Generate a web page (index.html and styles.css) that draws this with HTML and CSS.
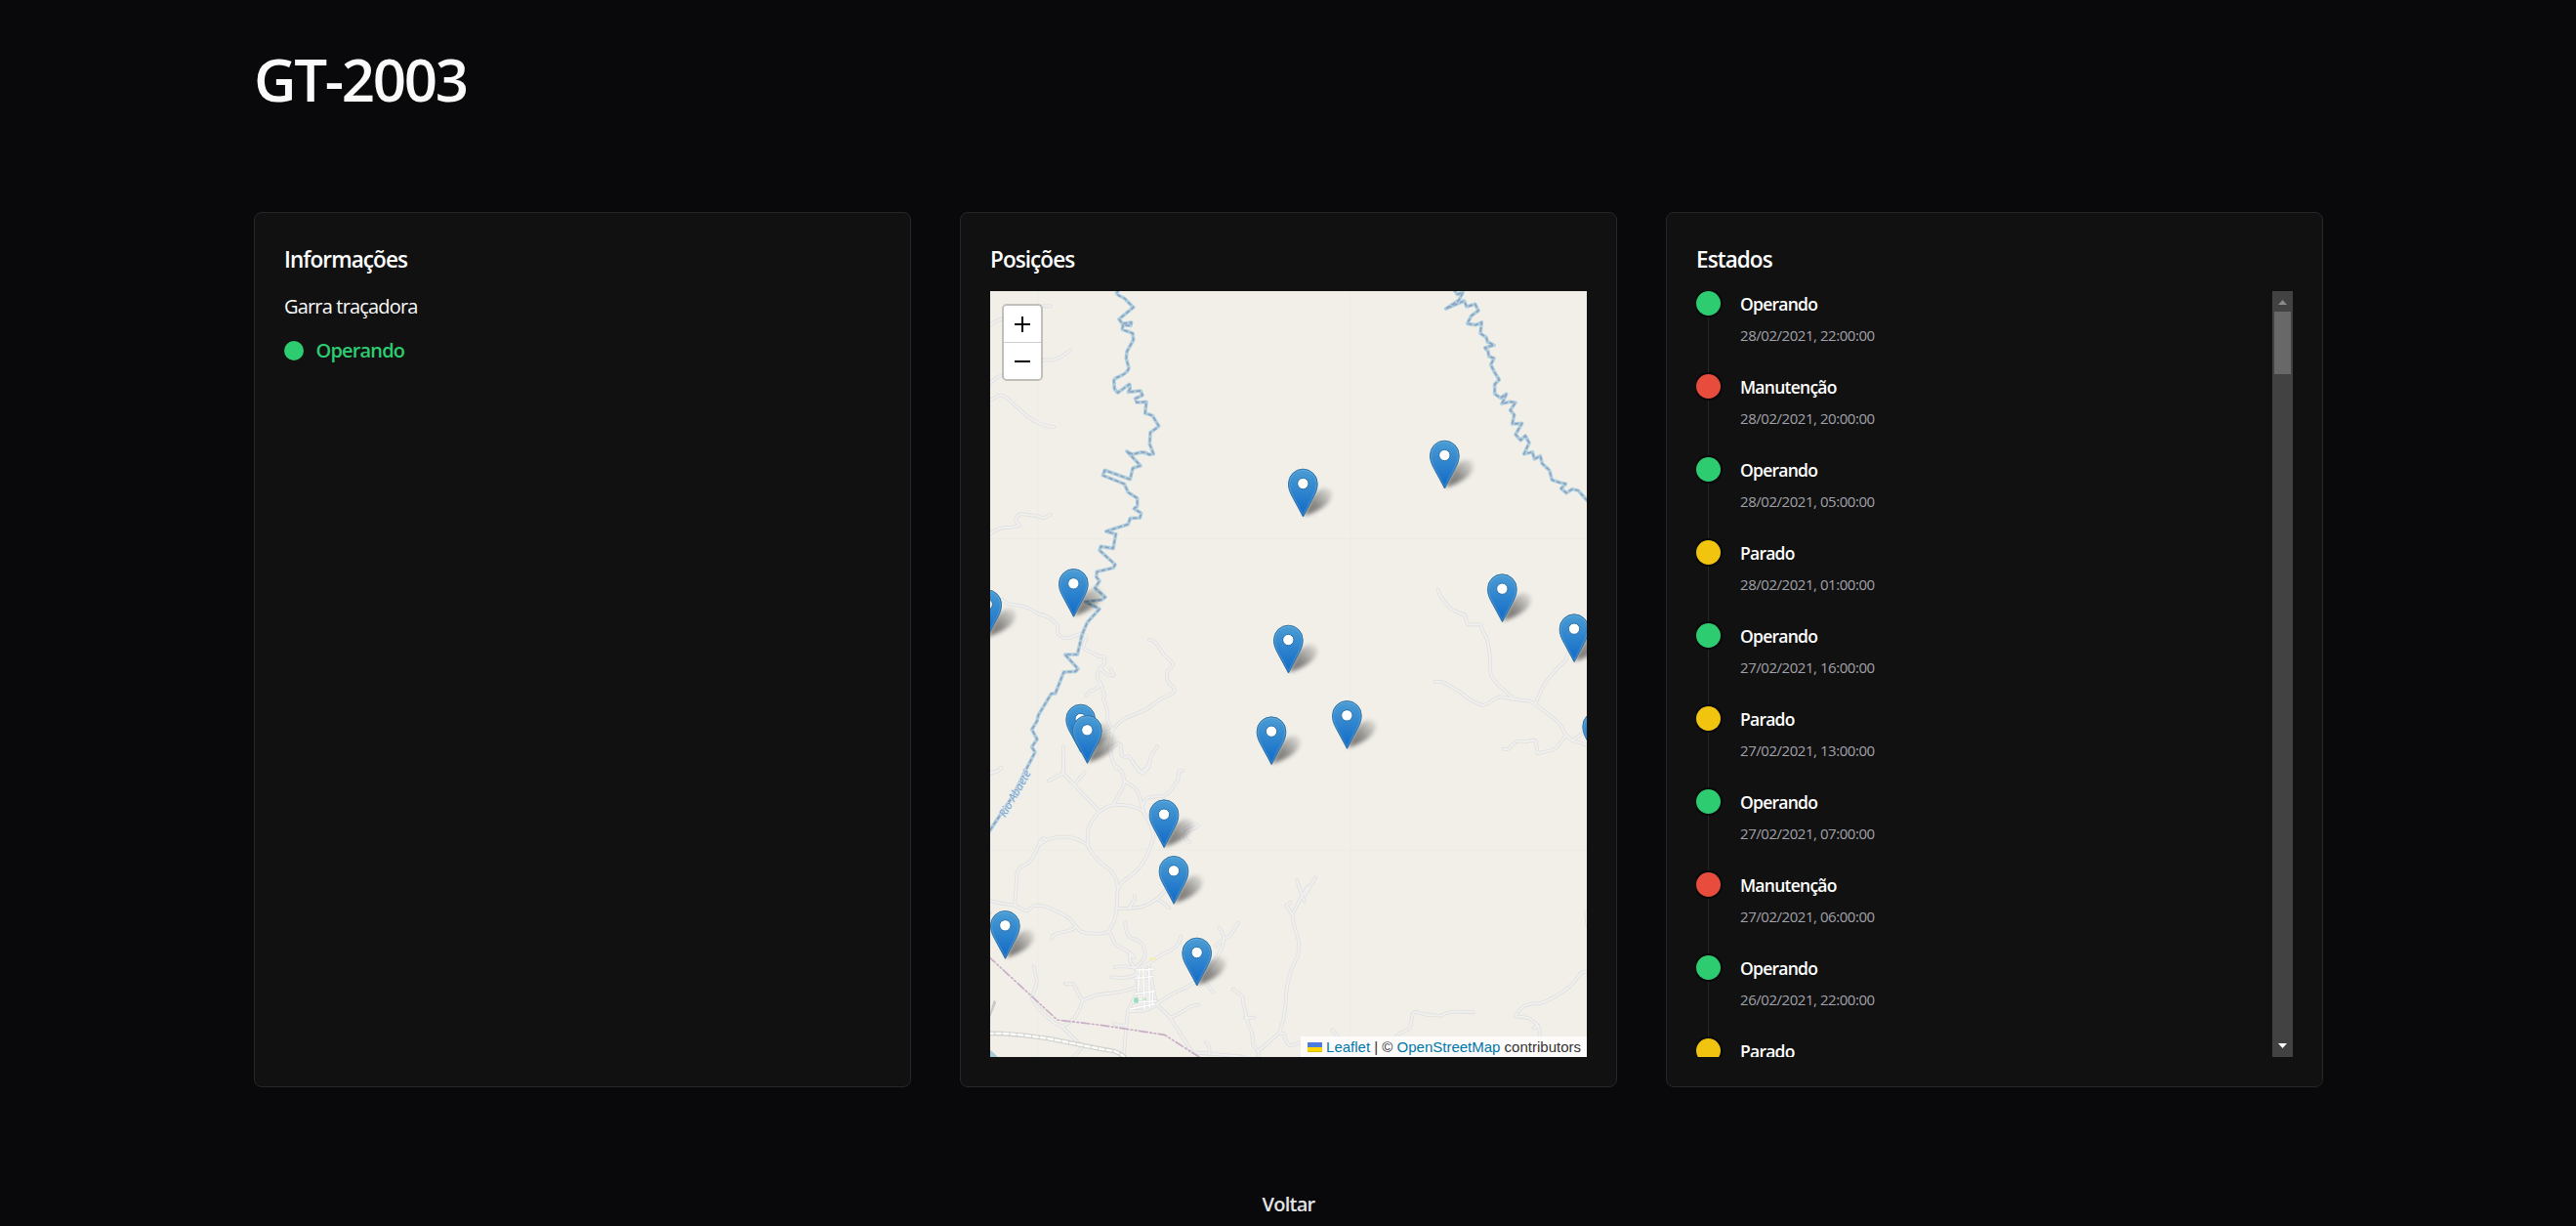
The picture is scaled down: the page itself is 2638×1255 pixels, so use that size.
FILE: index.html
```html
<!DOCTYPE html>
<html lang="pt-BR">
<head>
<meta charset="utf-8">
<title>GT-2003</title>
<link rel="stylesheet" href="styles.css">
</head>
<body>
<main class="page">
  <h1 class="title">GT-2003</h1>
  <div class="cards">
    <section class="card">
      <h2 class="card-title">Informações</h2>
      <div class="info">
        <p class="model">Garra traçadora</p>
        <p class="status"><i class="status-dot"></i><span class="status-text">Operando</span></p>
      </div>
    </section>

    <section class="card">
      <h2 class="card-title">Posições</h2>
      <div class="map">
        <svg class="map-canvas" viewBox="0 0 1833 2352" preserveAspectRatio="none">
          <defs>
            <linearGradient id="pinFill" x1="0" y1="0" x2="0" y2="1">
              <stop offset="0" stop-color="#4b9dd4"/><stop offset="1" stop-color="#1069c6"/>
            </linearGradient>
            <linearGradient id="shadowFill" gradientUnits="userSpaceOnUse" x1="0" y1="0" x2="88" y2="-80">
              <stop offset="0" stop-color="#000" stop-opacity=".56"/><stop offset=".45" stop-color="#000" stop-opacity=".42"/><stop offset="1" stop-color="#000" stop-opacity=".06"/>
            </linearGradient>
            <filter id="blur" x="-30%" y="-40%" width="160%" height="180%"><feGaussianBlur stdDeviation="6"/></filter>
            <g id="pin">
              <path d="M0 0L-35 -65C-42 -79 -44.500 -88 -44.500 -101A44.500 44.500 0 0 1 44.500 -101C44.500 -88 42 -79 35 -65Z" fill="url(#pinFill)" stroke="#2e73a6" stroke-width="3"/>
              <path d="M0 -8L-32 -66C-38 -79 -41 -88 -41 -101A41 41 0 0 1 41 -101C41 -88 38 -79 32 -66Z" fill="none" stroke="#fff" stroke-opacity=".14" stroke-width="3"/>
              <circle cy="-101" r="17" fill="#fff" stroke="#2c70a8" stroke-width="3"/>
            </g>
            <path id="shadow" d="M2 -2L22 -46C34 -78 62 -94 82 -84C98 -72 86 -46 64 -30C46 -17 22 -7 2 -2Z" fill="url(#shadowFill)" filter="url(#blur)"/>
            <g id="roads">
              <g transform="translate(-42 -294)">
                <path d="M40 400Q60 383 84 378M200 340L228 340M40 580Q60 555 84 552M200 508C225 497 220 515 250 500C272 490 275 485 288 476M40 628C60 625 62 610 80 614C110 628 145 680 185 696Q215 712 238 711"/>
              </g>
              <g transform="translate(-42 546)">
                <path d="M40 200Q72 176 104 180L132 174C132 165 118 168 120 155C130 130 145 140 170 143C195 140 198 155 212 149L228 139M78 400Q90 415 110 416C165 425 165 430 190 446C215 448 228 458 248 480L250 505C265 525 285 522 310 510C320 505 330 508 338 516L330 540L332 555C350 558 365 570 375 576L392 576L394 596L376 618C366 645 374 648 380 655C382 670 358 682 348 682L338 696M380 612C398 628 400 640 422 632L412 616M380 655L392 690L390 710C410 745 400 765 404 778L418 802L385 812M418 802C450 760 470 762 520 740C550 720 565 700 600 692C615 675 605 670 592 660C580 640 585 640 586 620Q605 605 604 600C598 585 580 580 572 566C555 540 548 525 530 524M418 802L408 860C415 880 410 890 430 920M412 860C430 840 440 840 444 850L446 880C460 890 462 882 468 882L500 930M266 852L268 930M555 852C548 870 535 870 534 890C534 910 520 920 508 930M40 932C65 930 70 925 76 916"/>
              </g>
              <g transform="translate(978 786)">
                <path d="M398 132C405 160 425 175 438 192C455 192 460 208 478 206C488 215 480 230 490 238L530 238C530 262 550 270 552 300C562 340 555 360 560 392C575 425 605 440 632 468M388 414C410 410 425 420 440 430C480 450 490 475 536 486C570 476 570 458 592 460L632 468L675 472L697 482C715 440 722 420 740 400Q770 365 790 348L800 320M697 482L770 540C785 560 780 565 792 578L810 594L856 608M810 594L846 570M792 578C775 595 765 620 748 624L704 634L700 605C700 588 690 592 668 598C650 594 640 594 630 604C615 615 622 625 598 620"/>
              </g>
              <g transform="translate(-42 1446)">
                <path d="M420 0C425 20 440 15 446 30C460 60 455 70 440 95C425 120 425 120 422 132C480 128 515 150 515 160C545 200 545 230 540 245C535 260 520 300 500 325C480 350 460 355 445 372C428 390 435 410 430 450C428 490 415 505 405 520C385 530 360 530 322 522L305 505C295 490 285 475 250 460C200 437 190 440 175 442C160 455 155 460 145 455L118 440Q70 435 40 425M118 440L124 345C124 320 150 320 165 305C180 290 180 275 192 255C220 230 260 228 280 230C310 235 320 240 342 256C355 280 365 300 395 320C420 335 432 360 434 385M342 256C338 200 345 190 378 152Q400 135 422 132M378 152L302 72L265 35L268 0M302 72C310 50 320 50 332 32M265 35L222 58M455 58C480 75 498 85 500 105L515 160M512 130C515 105 535 108 575 105C600 90 605 75 612 65C628 50 615 50 622 28L634 28M480 0L510 38L530 15L530 0M192 255C195 240 205 228 215 240M40 35C60 32 65 30 76 18M430 450C510 450 520 445 555 420L590 385M555 420L592 448M470 448C475 430 490 430 485 412M305 508C270 530 235 518 232 542M456 492C462 520 458 540 490 545C520 560 520 585 516 600C508 620 500 615 492 630M405 520C420 530 415 550 430 562C455 580 475 580 485 600L470 592L472 612L492 640L496 700M530 625L545 710L555 745L595 785C615 820 640 850 660 890M500 632C550 615 560 590 590 582C600 575 622 570 628 535M425 630C440 625 460 628 485 632M414 660C440 665 465 665 488 654M490 692C450 710 400 710 370 715L325 732C310 710 305 690 298 682C280 680 285 685 272 680M325 732C320 760 300 800 262 812C210 790 185 750 170 725C175 700 185 690 186 670C178 650 182 645 176 628M262 812L325 875L300 905M498 700L482 730L465 765L460 810L452 905M460 808C430 810 425 808 424 802M465 765C510 765 530 765 552 745C580 725 610 705 640 695L672 675L710 640C740 600 755 580 760 545C755 515 750 515 745 510M735 565L765 540C780 540 780 530 804 494M705 680L727 707M595 785C640 770 650 745 682 746M640 205C660 190 675 185 680 195C670 210 640 205 640 225Q642 245 656 245M668 892L820 905M715 890C718 868 710 865 704 862M788 698C820 720 820 720 820 745C830 780 830 800 846 830L850 870L866 888L930 832C945 790 945 780 950 740C948 690 970 620 988 595L990 550C980 510 972 500 970 470L1000 410L984 362M970 470L952 440L964 432M1000 410L1018 382M930 832L945 835C950 865 960 872 970 870L1000 860M825 785L852 785M866 888L866 905"/>
              </g>
              <g transform="translate(918 1626)">
                <path d="M48 230L82 175M40 232L48 248M325 670C345 640 370 650 374 630C380 600 375 585 395 588C420 600 440 596 465 600C500 580 520 588 568 589M132 642L152 665M916 465C890 460 895 480 862 510C830 535 780 565 760 562C710 562 705 590 695 600C715 606 735 600 745 612C770 630 770 640 770 665M752 638L765 630M916 320L912 280"/>
              </g>
            </g>
            <path id="town" d="M450 2085L502 2082M446 2110L500 2105M444 2158L505 2150M438 2185L510 2180M470 2080L474 2205M488 2080L490 2200M430 2205L505 2190M458 2082L455 2150M500 2145L498 2190"/>
            <g id="rivers">
              <path d="M408 -20L388 6C395 20 410 15 418 28L440 50L418 68L396 86L406 100L434 96L432 106L408 104L406 118L438 130L440 150L420 186L418 206L426 236C420 262 385 260 380 274L382 300L392 312L428 286L430 298L424 310L462 306L468 320L446 330L450 342L480 340L476 375L498 382L518 414L512 420L492 434L490 470L502 500L488 502C470 488 450 498 438 502L420 492L462 536L438 544L430 578L352 550L346 566L412 592L424 618L452 636L452 660L442 668L464 682L460 696L430 698L424 716L380 730L356 738L386 746L378 790L340 784L336 796L384 840L378 850L328 862L326 878L336 890L322 912L354 940L342 948L292 954L336 976L298 1018L282 1056L268 1116L230 1116L270 1160L262 1168L226 1170L200 1236L188 1236L148 1302L144 1320L128 1346L144 1376L128 1400L138 1416L112 1466L70 1550L-10 1670"/>
              <path d="M1424 -6L1435 10L1452 4L1440 28L1400 54L1456 30L1464 48L1490 40L1500 60L1478 76L1466 100L1492 104L1510 96L1506 130L1524 142L1528 156L1548 166L1520 174L1530 186L1532 200L1548 206L1538 226L1550 250L1564 272L1550 286L1550 316L1568 328L1586 316L1572 346L1596 340L1614 342L1598 366L1610 380L1604 408L1634 406L1614 440L1630 458L1644 444L1656 466L1640 500L1666 494L1672 516L1690 506L1696 530L1718 550L1726 580L1750 588L1768 592L1754 606L1770 620L1788 608L1806 612L1840 650"/>
            </g>
          </defs>
          <path class="tile-seam" d="M147 0V2352M1106 0V2352M0 761H1833M0 1717H1833"/>
          <use href="#roads" class="road-edge"/>
          <use href="#roads" class="road-core"/>
          <use href="#town" class="town-edge"/>
          <use href="#town" class="town-core"/>
          <rect x="442" y="2170" width="13" height="16" fill="#96dcbf"/><rect x="470" y="2170" width="11" height="8" fill="#c4e8cf"/>
          <path d="M488 2050l16-5 6 8-18 4z" fill="#f3ecb2"/>
          <path class="highway-edge" d="M-5 2280C60 2278 100 2285 170 2294C260 2310 320 2325 380 2334Q402 2342 412 2352"/>
          <path class="highway-core" d="M-5 2280C60 2278 100 2285 170 2294C260 2310 320 2325 380 2334Q402 2342 412 2352"/>
          <path class="boundary" d="M-4 2044L206 2238L340 2254L536 2284L642 2352"/>
          <path d="M0 2330L24 2352H0Z" fill="#a5ccd8"/>
          <path d="M-4 2230L10 2180Q18 2176 18 2186L0 2230Z" fill="#c8c8c8"/>
          <path d="M-10 1905V1915H4V1905Z" fill="#dcdcd8"/>
          <use href="#rivers" class="river-edge"/>
          <use href="#rivers" class="river-core"/>
          <text class="river-label" transform="translate(46 1618) rotate(-60)">Rio Abaeté</text>
          <g>
            <use href="#shadow" x="1396" y="605"/><use href="#shadow" x="961" y="692"/><use href="#shadow" x="256" y="999"/><use href="#shadow" x="1573" y="1015"/>
            <use href="#shadow" x="-10" y="1063"/><use href="#shadow" x="1794" y="1138"/><use href="#shadow" x="916" y="1172"/><use href="#shadow" x="1096" y="1404"/>
            <use href="#shadow" x="278" y="1415"/><use href="#shadow" x="298" y="1449"/><use href="#shadow" x="864" y="1453"/><use href="#shadow" x="534" y="1708"/>
            <use href="#shadow" x="564" y="1881"/><use href="#shadow" x="46" y="2049"/><use href="#shadow" x="635" y="2132"/>
          </g>
          <g>
            <use href="#pin" x="1396" y="605"/><use href="#pin" x="961" y="692"/><use href="#pin" x="256" y="999"/><use href="#pin" x="1573" y="1015"/>
            <use href="#pin" x="-10" y="1063"/><use href="#pin" x="1794" y="1138"/><use href="#pin" x="916" y="1172"/><use href="#pin" x="1096" y="1404"/>
            <use href="#pin" x="278" y="1415"/><use href="#pin" x="1865" y="1437"/><use href="#pin" x="298" y="1449"/><use href="#pin" x="864" y="1453"/>
            <use href="#pin" x="534" y="1708"/><use href="#pin" x="564" y="1881"/><use href="#pin" x="46" y="2049"/><use href="#pin" x="635" y="2132"/>
          </g>
        </svg>
        <div class="zoom">
          <a class="zoom-btn"><svg width="16" height="16"><path d="M0 8H16M8 0V16"/></svg></a>
          <a class="zoom-btn"><svg width="16" height="16"><path d="M0 8H16"/></svg></a>
        </div>
        <div class="attribution"><svg class="flag" width="15" height="10"><path fill="#4c7be1" d="M0 0h15v5H0z"/><path fill="#ffd500" d="M0 5h15v4H0z"/><path fill="#e0bc00" d="M0 9h15v1H0z"/></svg><span class="credits"><a>Leaflet</a> | © <a>OpenStreetMap</a> contributors</span></div>
      </div>
    </section>

    <section class="card">
      <h2 class="card-title">Estados</h2>
      <div class="states">
        <ol class="timeline">
          <li class="item green"><b>Operando</b><time>28/02/2021, 22:00:00</time></li>
          <li class="item red"><b>Manutenção</b><time>28/02/2021, 20:00:00</time></li>
          <li class="item green"><b>Operando</b><time>28/02/2021, 05:00:00</time></li>
          <li class="item yellow"><b>Parado</b><time>28/02/2021, 01:00:00</time></li>
          <li class="item green"><b>Operando</b><time>27/02/2021, 16:00:00</time></li>
          <li class="item yellow"><b>Parado</b><time>27/02/2021, 13:00:00</time></li>
          <li class="item green"><b>Operando</b><time>27/02/2021, 07:00:00</time></li>
          <li class="item red"><b>Manutenção</b><time>27/02/2021, 06:00:00</time></li>
          <li class="item green"><b>Operando</b><time>26/02/2021, 22:00:00</time></li>
          <li class="item yellow"><b>Parado</b></li>
        </ol>
        <div class="scrollbar">
          <svg class="arrow" width="21" height="21"><path d="M6 14L10.500 9L15 14Z" fill="#8b8b8b"/></svg>
          <div class="thumb"></div>
          <svg class="arrow" width="21" height="21"><path d="M6 7L10.500 12L15 7Z" fill="#fff"/></svg>
        </div>
      </div>
    </section>
  </div>
  <a class="back">Voltar</a>
</main>
</body>
</html>
```
FILE: styles.css
```css
* { box-sizing: border-box; margin: 0; padding: 0; }

body {
  height: 1255px;
  overflow: hidden;
  background: #09090b;
  color: #fafafa;
  font-family: "Segoe UI", "Open Sans", "Noto Sans", sans-serif;
}

.page {
  display: flex;
  flex-direction: column;
  padding: 50px 259px 0 260px;
}

.title { font-size: 60px; line-height: 62px; font-weight: 600; letter-spacing: -2.3px; }

.cards {
  display: grid;
  grid-template-columns: repeat(3, 1fr);
  gap: 50px;
  height: 896px;
  margin-top: 105px;
}

.card {
  display: flex;
  flex-direction: column;
  gap: 15px;
  min-width: 0;
  padding: 30px;
  background: #111;
  border: 1px solid #27272a;
  border-radius: 8px;
}

.card-title { font-size: 22.5px; line-height: 35px; font-weight: 600; letter-spacing: -.92px; color: #fff; }

.info { display: flex; flex-direction: column; gap: 14px; font-size: 20px; line-height: 30px; letter-spacing: -.83px; }
.model { padding-top: 1px; }
.status { display: flex; align-items: center; gap: 12.5px; color: #2ecc71; font-weight: 600; }
.status-text { padding-top: 1px; }
.status-dot { width: 20px; height: 20px; border-radius: 50%; background: #2ecc71; }

.map { position: relative; flex: 1; overflow: hidden; background: #f2efe9; }
.map-canvas { display: block; width: 100%; height: 784px; }
.map-canvas path { stroke-linejoin: round; stroke-linecap: round; }
.tile-seam { fill: none; stroke: #ecebe7; stroke-width: 3; }
.road-edge { fill: none; stroke: #dfdfdd; stroke-width: 11; }
.road-core { fill: none; stroke: #f1f0f0; stroke-width: 6; }
.town-edge { fill: none; stroke: #e0e0e0; stroke-width: 8; }
.town-core { fill: none; stroke: #fff; stroke-width: 4; }
.highway-edge { fill: none; stroke: #d2d2cf; stroke-width: 14; }
.highway-core { fill: none; stroke: #fcfcfa; stroke-width: 7; stroke-dasharray: 14 9; }
.boundary { fill: none; stroke: #c8aec6; stroke-width: 5; stroke-dasharray: 26 8 5 8 5 8; }
.river-edge { fill: none; stroke: #acd1de; stroke-width: 11; }
.river-core { fill: none; stroke: #959fc0; stroke-width: 5; stroke-dasharray: 9 11; }
.river-label {
  font: italic 34px "Noto Sans", sans-serif;
  fill: #7ba3cc;
  stroke: #dfe9ee;
  stroke-width: 4;
  paint-order: stroke;
}

.zoom {
  position: absolute;
  top: 13px;
  left: 12px;
  width: 42px;
  border: 2px solid rgba(0, 0, 0, .2);
  border-radius: 5px;
  background-clip: padding-box;
}
.zoom-btn { display: grid; place-items: center; height: 37px; background: #fff; border-radius: 0 0 3px 3px; }
.zoom-btn:first-child { height: 38px; border-bottom: 1px solid #ccc; border-radius: 3px 3px 0 0; }
.zoom-btn path { fill: none; stroke: #000; stroke-width: 2; stroke-linecap: butt; }

.attribution {
  position: absolute;
  right: 0;
  bottom: 0;
  display: flex;
  align-items: center;
  gap: 4px;
  height: 21px;
  padding: 0 6px 0 7px;
  background: rgba(255, 255, 255, .8);
  color: #333;
  font: 15px/21px "Liberation Sans", Arial, sans-serif;
  white-space: nowrap;
}
.attribution a { color: #0078a8; }

.states { display: flex; flex: 1; height: 784px; overflow: hidden; }
.timeline { flex: 1; height: 784px; overflow: hidden; list-style: none; }

.item {
  position: relative;
  display: flex;
  flex-direction: column;
  gap: 8px;
  height: 85px;
  padding: 1px 0 0 45px;
}
.item::before {
  content: "";
  position: absolute;
  top: 0;
  left: 0;
  width: 25px;
  height: 25px;
  border-radius: 50%;
  box-shadow: 0 0 0 2px #09090b;
  background: var(--state);
}
.item::after {
  content: "";
  position: absolute;
  top: 27px;
  left: 12px;
  width: 1px;
  height: 56px;
  background: #27272a;
}
.item b { font-size: 17.5px; line-height: 25px; font-weight: 600; letter-spacing: -.75px; color: #fff; }
.item time { font-size: 15px; line-height: 22px; letter-spacing: -.45px; color: #a1a1aa; }
.green { --state: #2ecc71; }
.red { --state: #e74c3c; }
.yellow { --state: #f1c40f; }

.scrollbar { display: flex; flex-direction: column; width: 21px; background: #424242; }
.thumb { width: 17px; height: 64px; margin: 0 2px auto; background: #686868; }
.arrow { display: block; }

.back {
  align-self: center;
  margin-top: 105px;
  font-size: 20px;
  line-height: 30px;
  font-weight: 600;
  letter-spacing: -.75px;
  color: #e4e4e7;
}
```
